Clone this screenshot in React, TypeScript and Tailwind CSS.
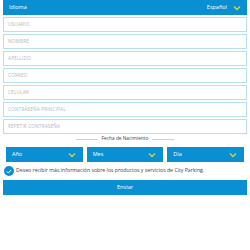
const fields = [
  "USUARIO",
  "NOMBRE",
  "APELLIDO",
  "CORREO",
  "CELULAR",
  "CONTRASEÑA PRINCIPAL",
  "REPETIR CONTRASEÑA",
];

function Chevron() {
  return (
    <svg width="8" height="6" viewBox="0 0 8 6" fill="none">
      <path d="M1 1.5 L4 4.5 L7 1.5" stroke="#d9d92b" strokeWidth="1.3" />
    </svg>
  );
}

export default function App() {
  return (
    <div
      className="w-[250px] h-[250px] bg-white px-[3px] flex flex-col"
      style={{ fontFamily: '"Open Sans", sans-serif' }}
    >
      <div className="h-[15px] bg-[#0a8fd2] flex items-center justify-between pl-[6px] pr-[6px] text-white text-[5.5px]">
        <span>Idioma</span>
        <span className="flex items-center gap-[6px]">
          Español
          <Chevron />
        </span>
      </div>

      <div className="flex flex-col gap-[1.5px] mt-[1.5px]">
        {fields.map((f) => (
          <div
            key={f}
            className="h-[15.5px] border border-[#b5dff3] bg-white flex items-center pl-[4px] text-[4.8px] text-[#b8b8b8] tracking-[0.1px]"
          >
            {f}
          </div>
        ))}
      </div>

      <div className="flex items-center justify-center gap-[4px] mt-[1px] h-[8px]">
        <div className="w-[22px] h-px bg-[#d0d0d0]" />
        <span className="text-[4.8px] text-[#444]">Fecha de Nacimiento</span>
        <div className="w-[22px] h-px bg-[#d0d0d0]" />
      </div>

      <div className="grid grid-cols-3 gap-[4px] mt-[4px] px-[3px]">
        {["Año", "Mes", "Día"].map((s) => (
          <div
            key={s}
            className="h-[15px] bg-[#0a8fd2] flex items-center justify-between pl-[6px] pr-[7px] text-white text-[5.5px]"
          >
            <span>{s}</span>
            <Chevron />
          </div>
        ))}
      </div>

      <div className="flex items-center gap-[2px] mt-[4px] pl-[1px]">
        <div className="w-[10px] h-[10px] rounded-full bg-[#0a8fd2] flex items-center justify-center">
          <svg width="6" height="5" viewBox="0 0 6 5" fill="none">
            <path d="M0.8 2.5 L2.3 4 L5.2 1" stroke="white" strokeWidth="1" />
          </svg>
        </div>
        <span className="text-[5.2px] text-[#444]">
          Deseo recibir más información sobre los productos y servicios de City Parking.
        </span>
      </div>

      <div className="h-[15px] mt-[4px] bg-[#0a8fd2] flex items-center justify-center text-white text-[5.5px]">
        Enviar
      </div>
    </div>
  );
}
